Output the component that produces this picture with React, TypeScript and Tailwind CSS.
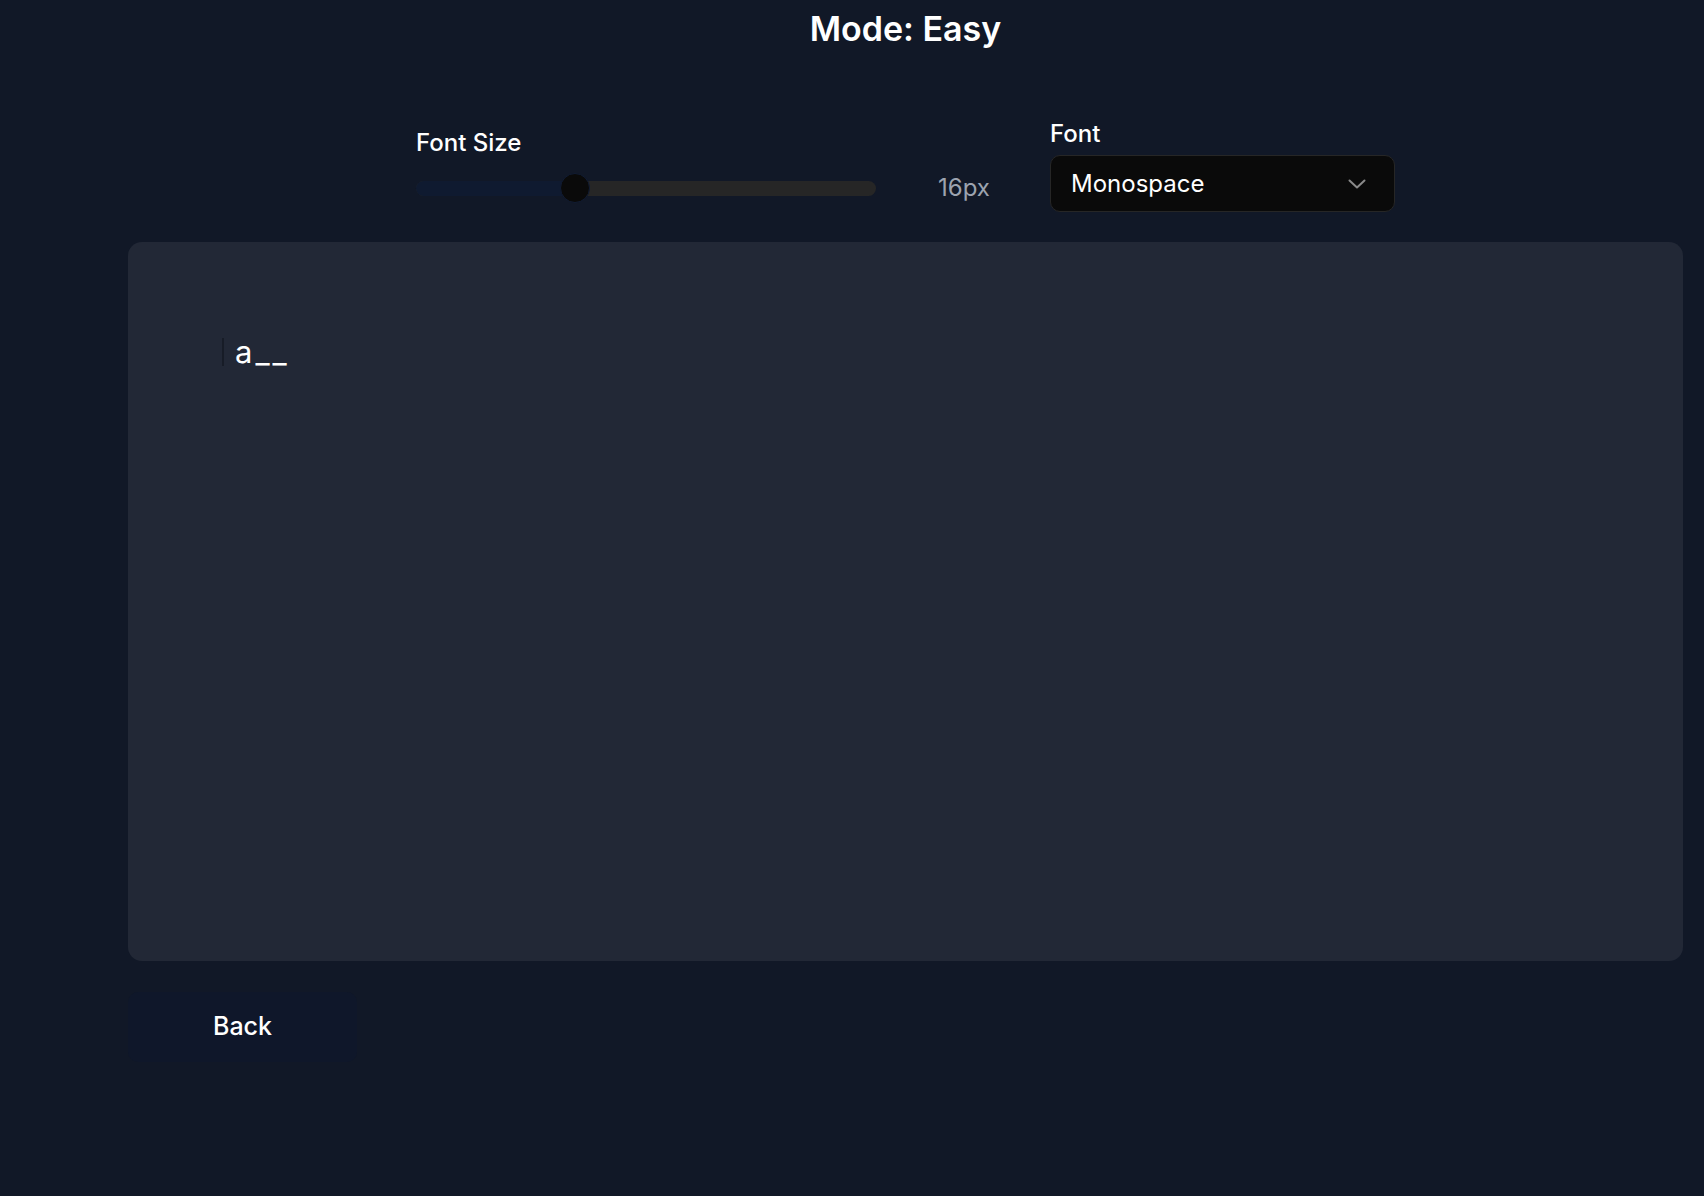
import React from "react";

export default function App() {
  const font = { fontFamily: "Inter, 'Noto Sans', sans-serif" };
  return (
    <div className="min-h-[1196px] w-full bg-[#111827] text-white" style={font}>
      <div className="pl-[128px] pr-[21px] flex flex-col">
        <h1 className="text-center text-[34px] leading-[40px] font-semibold pt-[9px]">Mode: Easy</h1>

        <div className="flex justify-center items-center gap-[59px] mt-[64px]">
          <div className="flex flex-col w-[575px] mt-[6px]">
            <div className="text-[24px] leading-[30px] font-medium">Font Size</div>
            <div className="flex items-center mt-[15px] h-[30px]">
              <div className="relative w-[460px] h-[15px] rounded-full bg-[#262626]">
                <div className="absolute left-0 top-0 h-full w-[159px] rounded-l-full bg-[#0f1a30]" />
                <div className="absolute left-[144px] top-[-8px] w-[30px] h-[30px] rounded-full bg-[#0a0a0a] border border-[#111c33]" />
              </div>
              <div className="ml-[62px] text-[24px] leading-[30px] text-[#9ca3af]">16px</div>
            </div>
          </div>
          <div className="flex flex-col w-[345px] mt-[6px]">
            <div className="text-[24px] leading-[30px] font-medium">Font</div>
            <div className="mt-[6px] h-[57px] rounded-[10px] border border-[#262626] bg-[#0a0a0a] flex items-center justify-between pl-[20px] pr-[28px]">
              <span className="text-[24px]">Monospace</span>
              <svg width="18" height="10" viewBox="0 0 18 10" fill="none">
                <path d="M1.5 1.5 L9 8.5 L16.5 1.5" stroke="#8a8a8a" strokeWidth="2" strokeLinecap="round" strokeLinejoin="round" />
              </svg>
            </div>
          </div>
        </div>

        <div className="mt-[30px] h-[719px] rounded-[14px] bg-[#222836] pl-[94px] pt-[92px]">
          <div className="flex items-center">
            <div className="w-[2px] h-[28px] bg-[#171c27] mr-[11px]" />
            <span className="text-[31px] leading-[36px] tracking-[3px] text-white">a__</span>
          </div>
        </div>

        <div className="mt-[31px]">
          <button className="w-[229px] h-[70px] rounded-[10px] bg-[#0f172a] text-[25px] font-medium text-white">Back</button>
        </div>
      </div>
    </div>
  );
}
